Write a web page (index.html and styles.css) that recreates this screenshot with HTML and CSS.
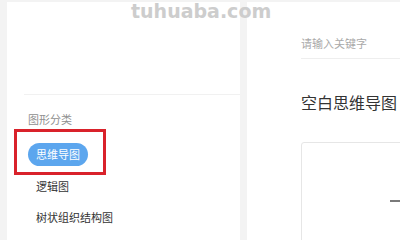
FILE: index.html
```html
<!DOCTYPE html>
<html lang="zh">
<head>
<meta charset="utf-8">
<link rel="stylesheet" href="styles.css">
</head>
<body>
<div class="page">
  <aside class="side">
    <div class="side-top"></div>
    <div class="divider"></div>
    <div class="heading">图形分类</div>
    <ul class="cats">
      <li class="cat"><span class="pill">思维导图</span></li>
      <li class="cat"><span class="label">逻辑图</span></li>
      <li class="cat"><span class="label">树状组织结构图</span></li>
    </ul>
  </aside>
  <main class="main">
    <div class="search">请输入关键字</div>
    <h1 class="title">空白思维导图</h1>
    <div class="card">
      <span class="plus"></span>
    </div>
  </main>
</div>
<div class="highlight"></div>
<div class="watermark">tuhuaba.com</div>
</body>
</html>
```

FILE: styles.css
```css
html, body {
  margin: 0;
  padding: 0;
  width: 400px;
  height: 240px;
  overflow: hidden;
  background: #f3f3f3;
  font-family: "Noto Sans CJK SC", "Noto Sans", sans-serif;
  position: relative;
}
.page {
  display: flex;
  gap: 7px;
  padding: 2px 0 0 7px;
  height: 238px;
  overflow: hidden;
}
.side {
  width: 233px;
  flex: none;
  background: #fff;
  height: 100%;
}
.side-top {
  height: 92px;
}
.divider {
  height: 1px;
  margin-left: 17px;
  background: #f1f1f1;
}
.heading {
  margin: 16px 0 0 21px;
  font-size: 11px;
  line-height: 16px;
  color: #8f8f8f;
}
.cats {
  list-style: none;
  margin: 12px 0 0 21px;
  padding: 0;
}
.cat {
  height: 31px;
  display: flex;
  align-items: center;
  font-size: 11px;
}
.pill {
  display: inline-block;
  height: 23px;
  line-height: 23px;
  padding: 0 8px;
  border-radius: 12px;
  background: #5ca6ee;
  color: #fff;
}
.label {
  padding-left: 8px;
  color: #333;
}
.main {
  flex: 1;
  background: #fff;
  height: 100%;
  padding-left: 54px;
  min-width: 0;
  overflow: hidden;
}
.search {
  margin-top: 26px;
  height: 30px;
  line-height: 30px;
  border-bottom: 1px solid #eeeeee;
  font-size: 11px;
  color: #a9a9a9;
}
.title {
  margin: 31px 0 0 0;
  font-size: 16px;
  line-height: 24px;
  font-weight: normal;
  color: #333;
}
.card {
  margin-top: 28px;
  width: 200px;
  height: 120px;
  border: 1px solid #e6e6e6;
  border-radius: 3px;
  display: flex;
  align-items: center;
  padding-left: 88px;
  box-sizing: border-box;
  padding-bottom: 3px;
}
.plus {
  display: block;
  flex: none;
  width: 20px;
  height: 2px;
  background: #7a7a7a;
}
.highlight {
  position: absolute;
  left: 14px;
  top: 129px;
  width: 86px;
  height: 40px;
  border: 3px solid #d9222b;
}
.watermark {
  position: absolute;
  left: 131px;
  top: 0;
  font-family: "DejaVu Sans", sans-serif;
  font-weight: bold;
  font-size: 19px;
  line-height: 22px;
  color: #cdcdcd;
}
```
